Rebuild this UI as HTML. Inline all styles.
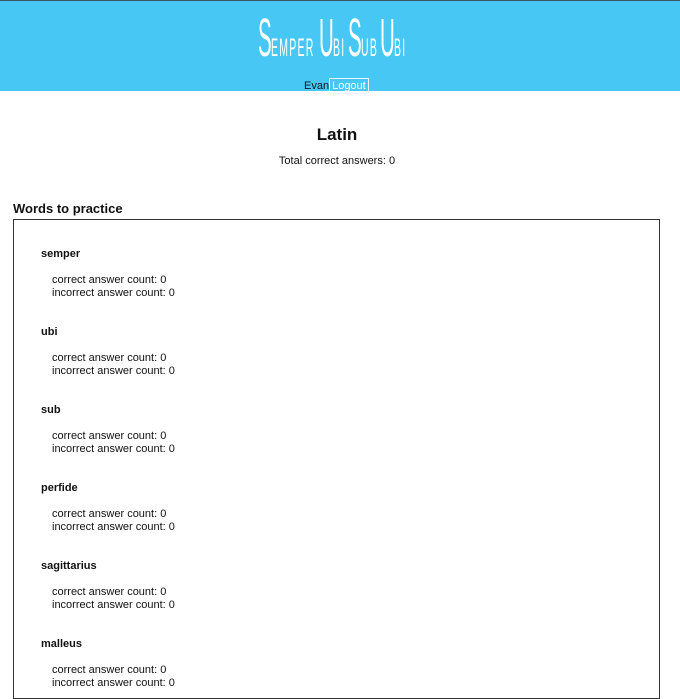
<!DOCTYPE html>
<html><head><meta charset="utf-8"><style>
body{margin:0;font-family:"Liberation Sans",sans-serif;color:#111;background:#fff;width:680px;height:680px;overflow:hidden;position:relative}
.hdr{position:absolute;left:0;top:0;width:680px;height:91px;background:#47c8f4;border-top:1px solid #3a5566;box-sizing:border-box}
.logo{position:absolute;left:258px;top:17px;color:#fff;font-size:0;white-space:nowrap;height:40px}
.logo span{display:inline-block;transform-origin:left bottom;vertical-align:bottom}
.b{font-size:54px;line-height:40px;height:40px;transform:scaleX(.38)}
.s{font-size:25px;line-height:20px;letter-spacing:3px;transform:scaleX(.42)}
.nav{position:absolute;top:77px;left:304px;font-size:11px;white-space:nowrap}
.nav .lo{display:inline-block;border:1px solid #e8f6fc;color:#fff;padding:0 2px;height:14px;line-height:14px}
.abs{position:absolute;white-space:nowrap}
.box{position:absolute;left:13px;top:219px;width:647px;height:480px;border:1px solid #333;box-sizing:border-box}
.w{position:absolute;left:41px;font-size:11px;font-weight:bold}
.c{position:absolute;left:52px;font-size:11px;line-height:12.5px}
</style></head><body>
<div class="hdr">
<div class="logo"><span class="b" style="width:13px">S</span><span class="s" style="width:48px">EMPER</span><span class="b" style="width:14px">U</span><span class="s" style="width:15px">BI</span><span class="b" style="width:13px">S</span><span class="s" style="width:19px">UB</span><span class="b" style="width:14px">U</span><span class="s" style="width:12px">BI</span></div>
<div class="nav">Evan<span class="lo">Logout</span></div>
</div>
<div class="abs" style="left:0;width:674px;text-align:center;top:125px;font-size:17px;font-weight:bold">Latin</div>
<div class="abs" style="left:0;width:674px;text-align:center;top:155px;font-size:11px">Total correct answers: 0</div>
<div class="abs" style="left:13px;top:201px;font-size:13px;font-weight:bold">Words to practice</div>
<div class="box"></div>
<div class="w" style="top:248px">semper</div><div class="c" style="top:274px">correct answer count: 0<br>incorrect answer count: 0</div>
<div class="w" style="top:326px">ubi</div><div class="c" style="top:352px">correct answer count: 0<br>incorrect answer count: 0</div>
<div class="w" style="top:404px">sub</div><div class="c" style="top:430px">correct answer count: 0<br>incorrect answer count: 0</div>
<div class="w" style="top:482px">perfide</div><div class="c" style="top:508px">correct answer count: 0<br>incorrect answer count: 0</div>
<div class="w" style="top:560px">sagittarius</div><div class="c" style="top:586px">correct answer count: 0<br>incorrect answer count: 0</div>
<div class="w" style="top:638px">malleus</div><div class="c" style="top:664px">correct answer count: 0<br>incorrect answer count: 0</div>
</body></html>
